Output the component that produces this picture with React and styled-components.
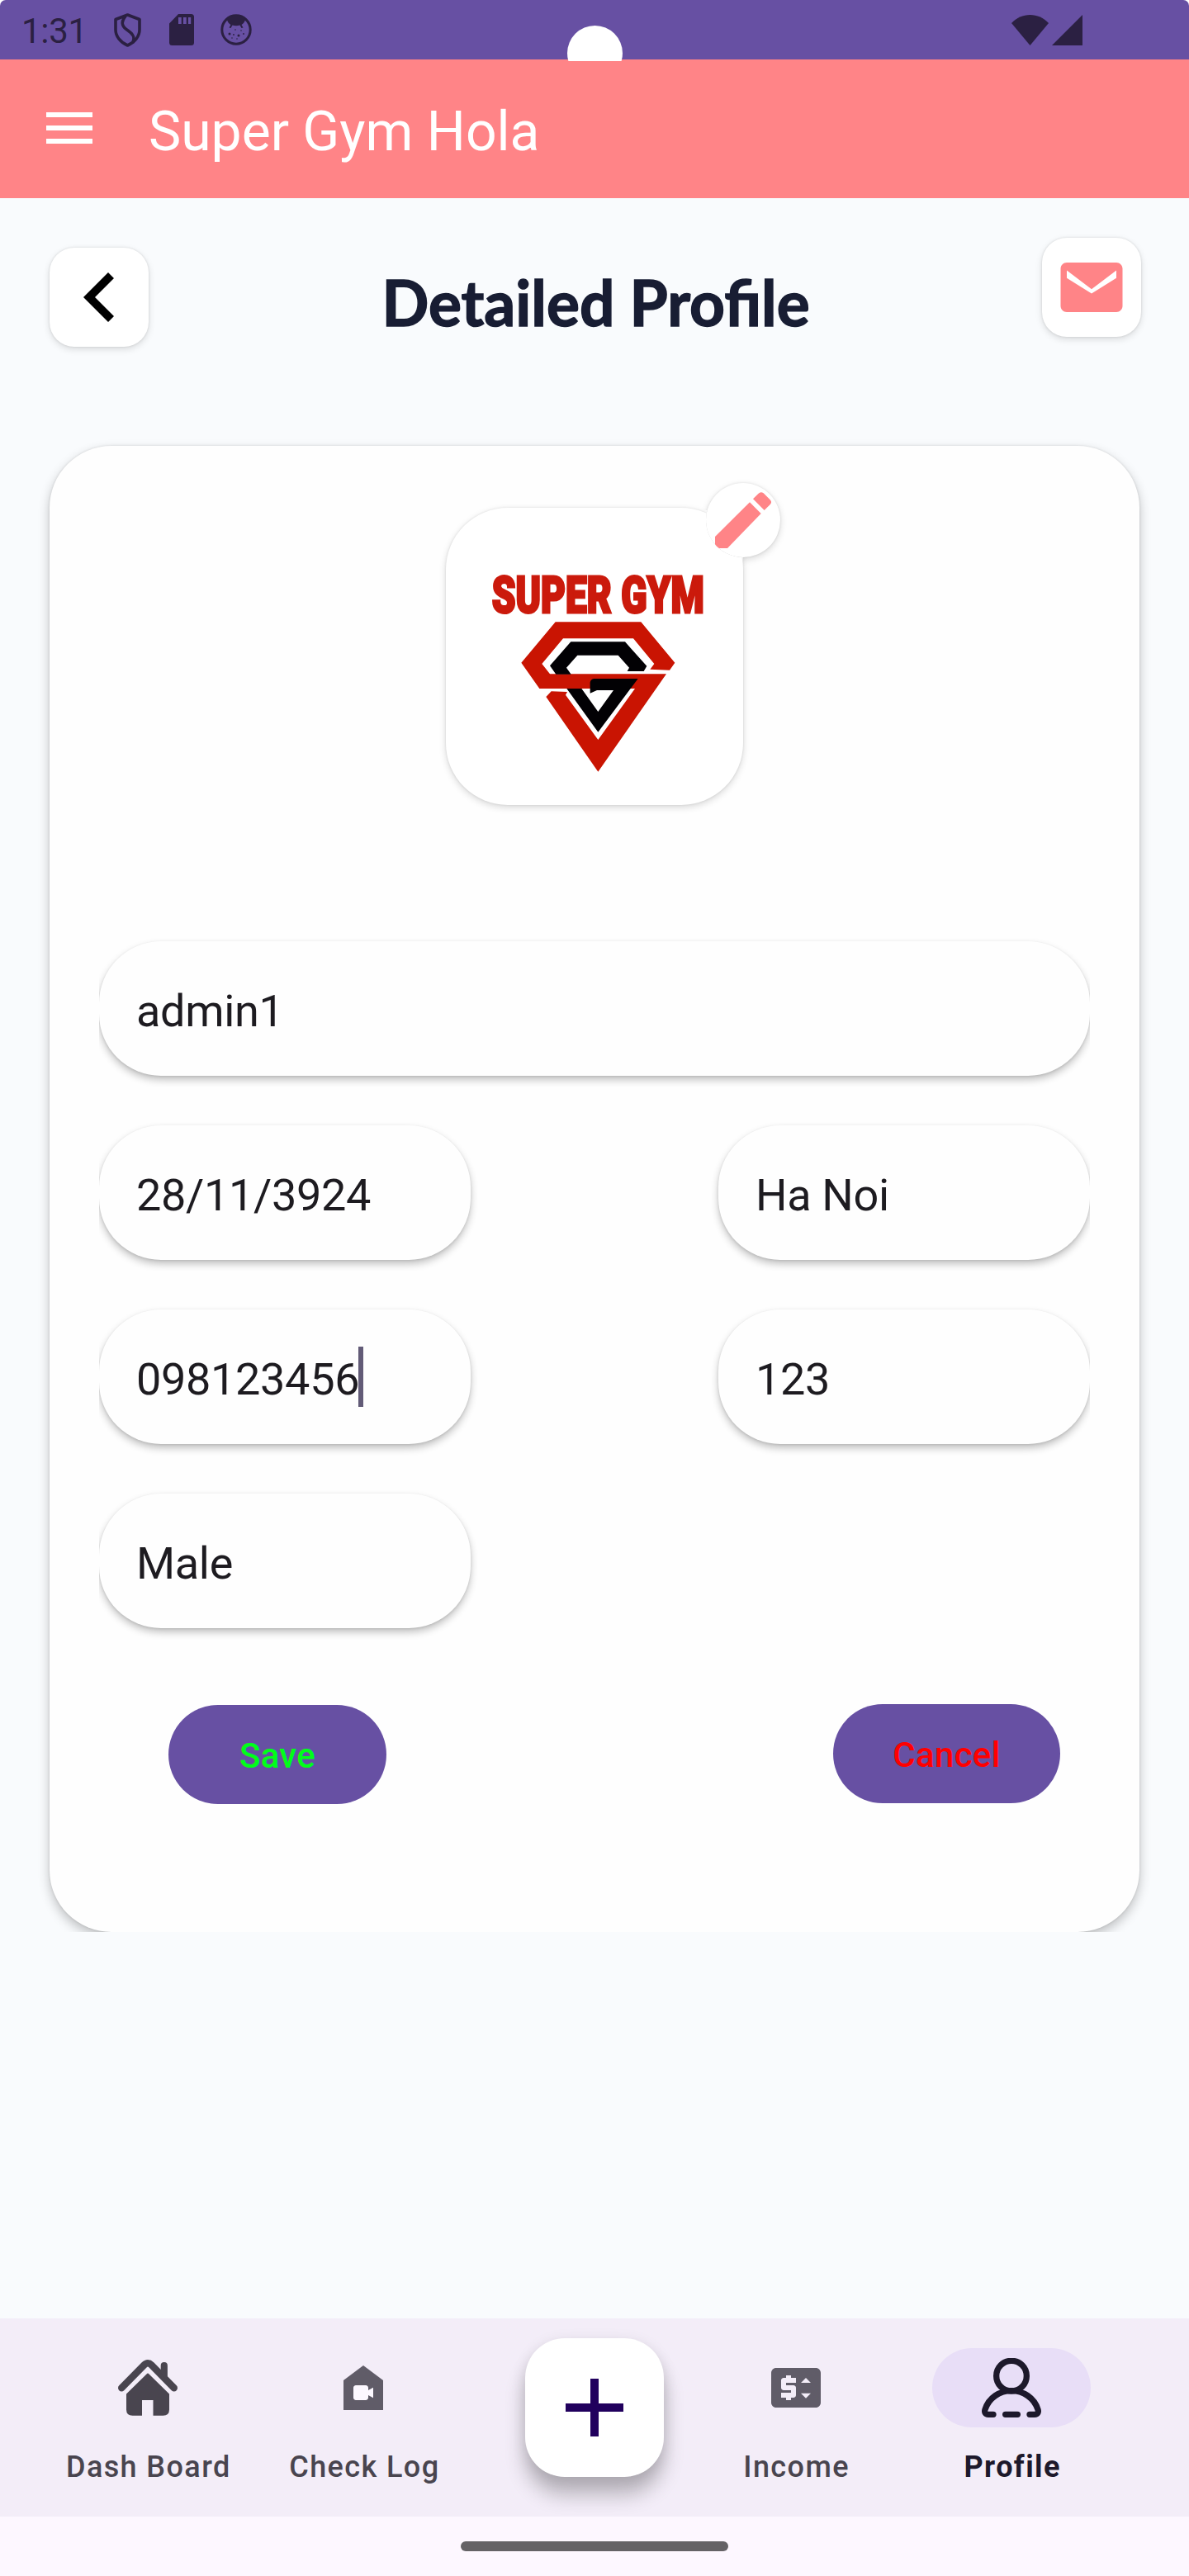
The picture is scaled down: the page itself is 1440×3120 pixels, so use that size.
import React from "react";
import styled, { createGlobalStyle } from "styled-components";

const GlobalStyle = createGlobalStyle`
  * { box-sizing: border-box; }
  body { margin: 0; background: #fff; }
  svg { display: block; flex: none; }
`;

const Screen = styled.div`
  width: 1440px;
  height: 3120px;
  display: flex;
  flex-direction: column;
  font-family: Roboto, "Liberation Sans", sans-serif;
  background: #f9fbfd;
  overflow: hidden;
`;

const StatusBack = styled.div`
  background: #fff;
  flex: none;
`;

const StatusBar = styled.header`
  position: relative;
  height: 72px;
  padding: 0 129px 0 26px;
  display: flex;
  align-items: center;
  justify-content: space-between;
  background: #6750a3;
  border-radius: 7px 7px 0 0;
  color: #2b2042;
`;

const StatusGroup = styled.div`
  display: flex;
  align-items: center;
  gap: ${(p) => p.$gap}px;
`;

const Clock = styled.span`
  width: 80px;
  padding-top: 3px;
  font-size: 42px;
  line-height: 48px;
  letter-spacing: -0.3px;
  white-space: nowrap;
`;

const CameraCutout = styled.div`
  position: absolute;
  z-index: 2;
  top: 31px;
  left: 687px;
  width: 67px;
  height: 43px;
  overflow: hidden;

  &::before {
    content: "";
    display: block;
    width: 67px;
    height: 67px;
    border-radius: 50%;
    background: #fff;
  }
`;

const Toolbar = styled.div`
  flex: none;
  height: 168px;
  padding-left: 56px;
  display: flex;
  align-items: center;
  gap: 68px;
  background: #ff8487;
`;

const MenuButton = styled.div`
  width: 56px;
  height: 38px;
  margin-bottom: 2px;
  display: flex;
  flex-direction: column;
  justify-content: space-between;
`;

const MenuLine = styled.span`
  height: 6px;
  background: #fff;
`;

const AppTitle = styled.h1`
  margin: 0;
  padding-top: 7px;
  font-size: 66px;
  line-height: 80px;
  font-weight: 400;
  color: #fff;
  white-space: nowrap;
`;

const Main = styled.main`
  flex: 1;
  display: flex;
  flex-direction: column;
`;

const PageHeader = styled.div`
  height: 300px;
  padding: 48px 58px 0 60px;
  display: flex;
  align-items: flex-start;
  justify-content: space-between;
`;

const SquareButton = styled.div`
  width: 120px;
  height: 120px;
  margin-top: ${(p) => p.$drop || 0}px;
  padding-right: ${(p) => p.$nudge || 0}px;
  display: flex;
  align-items: center;
  justify-content: center;
  background: #fff;
  border-radius: 30px;
  box-shadow: 0 3px 9px rgba(0, 0, 0, 0.13), 0 0 3px rgba(0, 0, 0, 0.12);
`;

const PageTitle = styled.h2`
  margin: 29px 0 0 2px;
  font-family: Lato, sans-serif;
  font-size: 77px;
  line-height: 96px;
  font-weight: 700;
  color: #181d33;
  -webkit-text-stroke: 1.5px #181d33;
  white-space: nowrap;
  transform: scaleX(0.972);
`;

const CardClip = styled.div`
  margin: 0 60px;
  clip-path: inset(-30px -30px 0 -30px);
`;

const Card = styled.section`
  height: 1800px;
  padding: 75px 60px 0;
  display: flex;
  flex-direction: column;
  align-items: center;
  background: #fefefe;
  border-radius: 75px;
  box-shadow: 0 6px 14px rgba(0, 0, 0, 0.24), 0 0 3px rgba(0, 0, 0, 0.12);
`;

const Avatar = styled.div`
  position: relative;
  flex: none;
  width: 360px;
  height: 360px;
  padding: 74px 0 0 8px;
  display: flex;
  flex-direction: column;
  align-items: center;
  background: #fff;
  border-radius: 75px;
  box-shadow: 0 3px 9px rgba(0, 0, 0, 0.15), 0 0 3px rgba(0, 0, 0, 0.1);
`;

const LogoText = styled.div`
  height: 64px;
  font-size: 62px;
  line-height: 64px;
  font-weight: 900;
  color: #cb1a0c;
  -webkit-text-stroke: 3px #cb1a0c;
  white-space: nowrap;
  transform: scaleX(0.742);
`;

const EditBadge = styled.div`
  position: absolute;
  top: -30px;
  right: -45px;
  width: 90px;
  height: 90px;
  border-radius: 50%;
  background: #fff;
  clip-path: path("M-20 -20H110V110H45V90A45 45 0 0 1 1.600 33H-20Z");
  box-shadow: 0 3px 8px rgba(0, 0, 0, 0.15), 0 0 3px rgba(0, 0, 0, 0.1);
`;

const Fields = styled.div`
  align-self: stretch;
  margin-top: 165px;
  display: grid;
  grid-template-columns: 450px 450px;
  grid-auto-rows: 163px;
  justify-content: space-between;
  row-gap: 60px;
  overflow-x: clip;
  overflow-y: visible;
`;

const Field = styled.div`
  grid-column: ${(p) => (p.$wide ? "1 / -1" : "auto")};
  padding: 6px 45px 0;
  display: flex;
  align-items: center;
  font-size: 54px;
  line-height: 72px;
  letter-spacing: -0.33px;
  color: #1d1b20;
  white-space: nowrap;
  background: #fefefe;
  border-radius: 75px;
  box-shadow: 0 5px 10px rgba(0, 0, 0, 0.24), 0 1px 3px rgba(0, 0, 0, 0.1);
`;

const Caret = styled.span`
  width: 6px;
  height: 73px;
  margin: 0 0 6px -1px;
  background: #625b77;
`;

const Actions = styled.div`
  align-self: stretch;
  margin-top: 92px;
  padding: 0 36px 0 84px;
  display: flex;
  justify-content: space-between;
`;

const ActionButton = styled.div`
  width: ${(p) => p.$width}px;
  height: 120px;
  margin-top: ${(p) => p.$drop || 0}px;
  padding-top: 4px;
  display: flex;
  align-items: center;
  justify-content: center;
  font-size: 42px;
  line-height: 56px;
  font-weight: 500;
  letter-spacing: 0.3px;
  color: ${(p) => p.$color};
  background: #6750a3;
  border-radius: 60px;
`;

const BottomNav = styled.nav`
  position: relative;
  flex: none;
  height: 240px;
  padding: 36px 84px 0 48px;
  display: grid;
  grid-template-columns: repeat(5, 261.6px);
  background: #f3edf8;
  overflow: hidden;
`;

const NavItem = styled.div`
  grid-column: ${(p) => p.$slot};
  display: flex;
  flex-direction: column;
  align-items: center;
  gap: 24px;
  color: ${(p) => (p.$active ? "#1d192b" : "#49454f")};
`;

const NavIndicator = styled.div`
  width: 192px;
  height: 96px;
  display: flex;
  align-items: center;
  justify-content: center;
  border-radius: 48px;
  background: ${(p) => (p.$active ? "#e8def7" : "transparent")};
`;

const NavLabel = styled.span`
  padding-left: 2px;
  font-size: 36px;
  line-height: 48px;
  font-weight: ${(p) => (p.$active ? 700 : 500)};
  letter-spacing: 1.4px;
  white-space: nowrap;
`;

const AddButton = styled.div`
  position: absolute;
  top: 24px;
  left: 636px;
  width: 168px;
  height: 168px;
  display: flex;
  align-items: center;
  justify-content: center;
  border-radius: 48px;
  background: #fff;
  box-shadow: 0 22px 24px rgba(0, 0, 0, 0.24), 0 4px 18px rgba(0, 0, 0, 0.1);
`;

const GestureBar = styled.footer`
  flex: none;
  height: 72px;
  padding-top: 30px;
  background: #fdf7ff;
`;

const GestureHandle = styled.div`
  width: 324px;
  height: 12px;
  margin: 0 auto;
  border-radius: 6px;
  background: #656266;
`;

const ShieldIcon = () => (
  <svg width="35" height="41" viewBox="0 0 35 41" fill="none" stroke="currentColor" strokeWidth="3.6" strokeLinejoin="round">
    <path d="M16.5 2 31 7.500V20c0 8-6 15.500-14.500 19C8 35.500 2 28 2 20V7.500Z" />
    <path d="M14 3.500C7 12 11 17 17 21s9 8 5.500 15" />
  </svg>
);

const SdIcon = () => (
  <svg width="30" height="38" viewBox="0 0 30 38">
    <path
      fill="currentColor"
      fillRule="evenodd"
      d="M11 0h15.500A3.500 3.500 0 0 1 30 3.500v31a3.500 3.500 0 0 1-3.500 3.500h-23A3.500 3.500 0 0 1 0 34.500V11.500ZM11 4v8h3.700V4Zm6 0v8h3.700V4Zm6 0v8h3.200V4Z"
    />
  </svg>
);

const FaceIcon = () => (
  <svg width="38" height="38" viewBox="0 0 38 38" fill="currentColor">
    <circle cx="19" cy="19" r="17.200" fill="none" stroke="currentColor" strokeWidth="3" />
    <path d="M7.500 6C13 0 25 0 30.500 6 29 10 27.500 12 25.500 13l2 3.500-2 .5-2-3.500c-3 1-6 1-9 0L12.500 17l-2-.5 2-3.500C10.500 12 9 10 7.500 6Z" />
    <circle cx="11" cy="24" r="1.500" />
    <circle cx="16" cy="25" r=".9" />
    <circle cx="22" cy="26" r="1.500" />
    <circle cx="28" cy="24" r=".9" />
    <circle cx="14" cy="29" r=".8" />
    <circle cx="20" cy="30" r=".8" />
    <circle cx="25" cy="20" r=".8" />
    <circle cx="18" cy="19" r=".8" />
  </svg>
);

const WifiIcon = () => (
  <svg width="45" height="37" viewBox="0 0 45 37">
    <path fill="currentColor" d="M22.500 37 0 10C6 3.500 14 0 22.500 0S39 3.500 45 10Z" />
  </svg>
);

const SignalIcon = () => (
  <svg width="37" height="37" viewBox="0 0 37 37">
    <path fill="currentColor" d="M37 0v37H0Z" />
  </svg>
);

const BackIcon = () => (
  <svg width="37" height="60" viewBox="0 0 37 60">
    <path d="M30 0 37 7 14 30l23 23-7 7L0 30Z" />
  </svg>
);

const MailIcon = () => (
  <svg width="90" height="90" viewBox="0 0 24 24">
    <path
      fill="#ff8487"
      d="M20 4H4c-1.100 0-1.990.9-1.990 2L2 18c0 1.100.9 2 2 2h16c1.100 0 2-.9 2-2V6c0-1.100-.9-2-2-2zm0 4.970-8 5.030-8-5.030V6.500l8 6.130 8-6.130z"
    />
  </svg>
);

const PencilIcon = () => (
  <svg width="90" height="90" viewBox="1065 135 270 270" fill="#ff8487">
    <path d="M1224 205 1265 246 1143 372H1114Q1098 370 1098 356V330Z" />
    <path d="M1236 193 1255 174Q1264 164 1274 172L1298 196Q1306 205 1299 212L1277 234Z" />
  </svg>
);

const LogoMark = () => (
  <svg width="187" height="182" viewBox="392 639 561 546">
    <path
      fill="#c91402"
      d="M517 640H828L951 788 932 815 861 812 876 792 800 700H545L468 792 497 829H920L672 1184 483 912 502 892 560 894 554 905 672 1068 806 882H459L393 788Z"
    />
    <path fill="#020104" d="M497 799 573 712H770L849 800 838 819H778L785 806 745 761H597L557 806 574 830H519Z" />
    <path fill="#020104" d="M558 882H612L672 966 728 888H668L643 899V860Q645 848 657 846H817L672 1040Z" />
  </svg>
);

const HomeIcon = () => (
  <svg width="72" height="68" viewBox="0 0 72 68">
    <path
      d="M4.200 34.300 31.500 6.500Q36 2 40.500 6.500L67.800 34.300"
      fill="none"
      stroke="currentColor"
      strokeWidth="8.400"
      strokeLinecap="round"
    />
    <path fill="currentColor" d="M51.700 16V7.200a4.100 4.100 0 0 1 8.200 0V26Z" />
    <path
      fill="currentColor"
      d="M34.500 17.500Q36 15.500 37.500 17.500L62 41.500V60.500Q62 67.700 54.500 67.700H42.500V49H29V67.700H17.500Q10 67.700 10 60.500V41.500Z"
    />
  </svg>
);

const CheckLogIcon = () => (
  <svg width="72" height="72" viewBox="0 0 24 24">
    <path fill="#605c68" d="M12 3 4 9v12h16V9z" />
    <path
      fill="#fcf8ff"
      d="M16 16.060 14 15v1c0 .55-.45 1-1 1H9c-.55 0-1-.45-1-1v-4c0-.55.45-1 1-1h4c.55 0 1 .45 1 1v1l2-1.060z"
    />
  </svg>
);

const IncomeIcon = () => (
  <svg width="72" height="72" viewBox="0 0 24 24">
    <path
      fill="#605c68"
      d="M20 4H4c-1.110 0-1.990.89-1.990 2L2 18c0 1.110.89 2 2 2h16c1.110 0 2-.89 2-2V6c0-1.110-.89-2-2-2zm-8 6H8v1h3c.55 0 1 .45 1 1v3c0 .55-.45 1-1 1h-1v1H8v-1H6v-2h4v-1H7c-.55 0-1-.45-1-1V9c0-.55.45-1 1-1h1V7h2v1h2v2zm4 6.250-2-2h4l-2 2zM14 10l2-2 2 2h-4z"
    />
  </svg>
);

const ProfileIcon = () => (
  <svg width="72" height="72" viewBox="507 228 216 216" fill="none" stroke="currentColor" strokeWidth="22" strokeLinecap="round">
    <circle cx="615" cy="293" r="55" />
    <path d="M549 433H531C520 433 516 425 519 415 533 372 572 347 615 347 658 347 697 372 711 415 714 425 710 433 699 433H681" />
    <path d="M593 433H637" />
  </svg>
);

const PlusIcon = () => (
  <svg width="70" height="70" viewBox="0 0 70 70">
    <path fill="#21005d" d="M30 0h10v30h30v10H40v30H30V40H0V30h30Z" />
  </svg>
);

const fields = [
  { value: "admin1", wide: true },
  { value: "28/11/3924" },
  { value: "Ha Noi" },
  { value: "098123456", focused: true },
  { value: "123" },
  { value: "Male" },
];

const navItems = [
  { label: "Dash Board", slot: 1, Icon: HomeIcon },
  { label: "Check Log", slot: 2, Icon: CheckLogIcon },
  { label: "Income", slot: 4, Icon: IncomeIcon },
  { label: "Profile", slot: 5, Icon: ProfileIcon, active: true },
];

export default function App() {
  return (
    <Screen>
      <GlobalStyle />
      <StatusBack>
        <StatusBar>
          <StatusGroup $gap={32}>
            <Clock>1:31</Clock>
            <ShieldIcon />
            <SdIcon />
            <FaceIcon />
          </StatusGroup>
          <StatusGroup $gap={4}>
            <WifiIcon />
            <SignalIcon />
          </StatusGroup>
          <CameraCutout />
        </StatusBar>
      </StatusBack>

      <Toolbar>
        <MenuButton>
          <MenuLine />
          <MenuLine />
          <MenuLine />
        </MenuButton>
        <AppTitle>Super Gym Hola</AppTitle>
      </Toolbar>

      <Main>
        <PageHeader>
          <SquareButton $drop={12} $nudge={2}>
            <BackIcon />
          </SquareButton>
          <PageTitle>Detailed Profile</PageTitle>
          <SquareButton>
            <MailIcon />
          </SquareButton>
        </PageHeader>

        <CardClip>
          <Card>
            <Avatar>
              <LogoText>SUPER GYM</LogoText>
              <LogoMark />
              <EditBadge>
                <PencilIcon />
              </EditBadge>
            </Avatar>

            <Fields>
              {fields.map((f) => (
                <Field key={f.value} $wide={f.wide}>
                  {f.value}
                  {f.focused && <Caret />}
                </Field>
              ))}
            </Fields>

            <Actions>
              <ActionButton $width={264} $color="#00ff19" $drop={1}>
                Save
              </ActionButton>
              <ActionButton $width={275} $color="#ff0000">
                Cancel
              </ActionButton>
            </Actions>
          </Card>
        </CardClip>
      </Main>

      <BottomNav>
        {navItems.map(({ label, slot, Icon, active }) => (
          <NavItem key={label} $slot={slot} $active={active}>
            <NavIndicator $active={active}>
              <Icon />
            </NavIndicator>
            <NavLabel $active={active}>{label}</NavLabel>
          </NavItem>
        ))}
        <AddButton>
          <PlusIcon />
        </AddButton>
      </BottomNav>

      <GestureBar>
        <GestureHandle />
      </GestureBar>
    </Screen>
  );
}
